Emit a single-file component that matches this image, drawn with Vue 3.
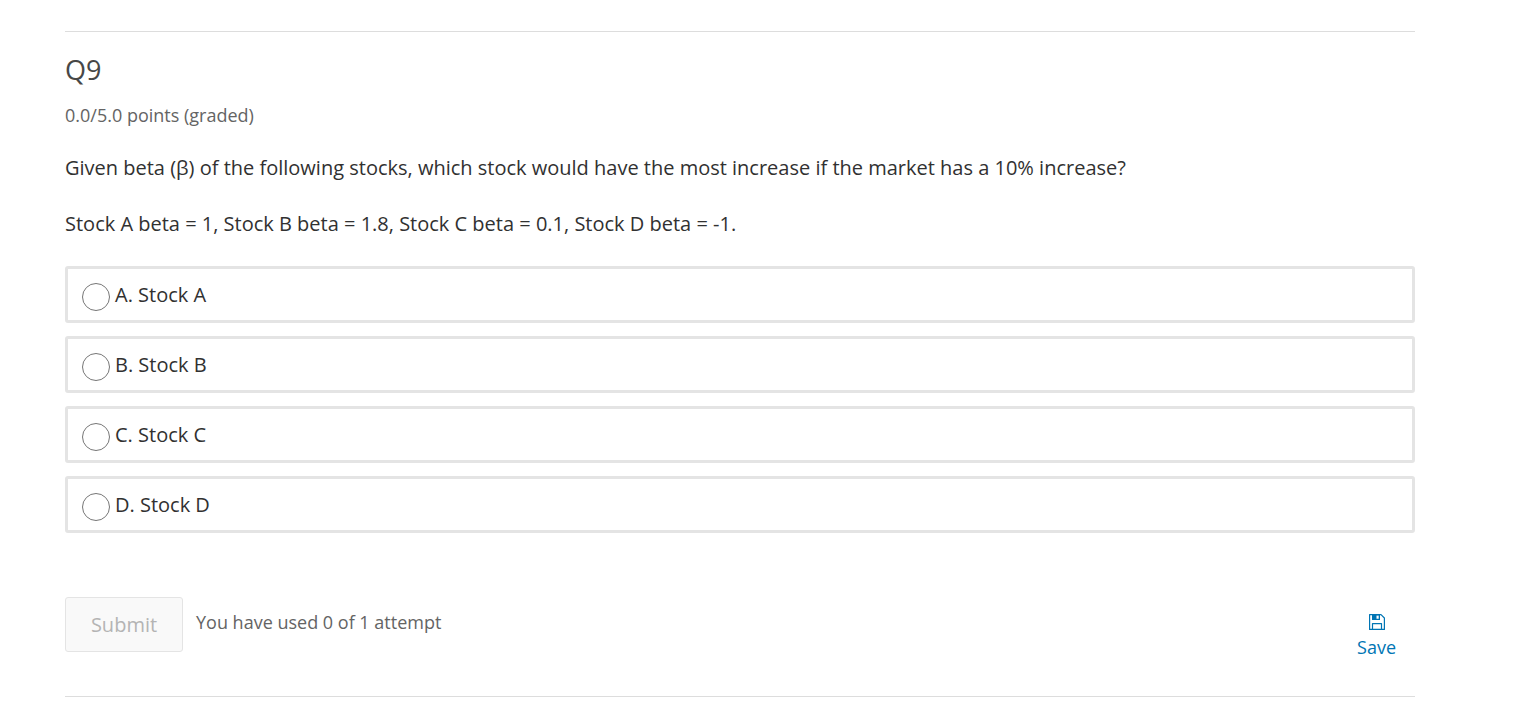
<script setup>
import { ref } from 'vue'

const choices = ['A. Stock A', 'B. Stock B', 'C. Stock C', 'D. Stock D']
const selected = ref(null)
</script>

<template>
  <main class="problem">
    <h3 class="title">Q9</h3>
    <p class="progress">0.0/5.0 points (graded)</p>
    <p class="question">Given beta (β) of the following stocks, which stock would have the most increase if the market has a 10% increase?</p>
    <p class="question">Stock A beta = 1, Stock B beta = 1.8, Stock C beta = 0.1, Stock D beta = -1.</p>
    <div class="choices" role="radiogroup" aria-label="Stock choices">
      <label v-for="(choice, i) in choices" :key="choice" class="choice" :for="'choice-' + i">
        <input :id="'choice-' + i" v-model="selected" class="radio" type="radio" name="stock" :value="i" />
        <span class="choice-text">{{ choice }}</span>
      </label>
    </div>
    <div class="action">
      <button class="submit" type="button" disabled>Submit</button>
      <p class="attempts">You have used 0 of 1 attempt</p>
      <button class="save" type="button">
        <svg class="save-icon" viewBox="0 0 16 16" width="16" height="16" aria-hidden="true">
          <path d="M0.600 0.600H12L15.400 4V15.400H0.600Z M3.500 15.400V9.600H12.500V15.400" fill="none" stroke="currentColor" stroke-width="1.200" stroke-linejoin="round" />
          <path d="M3 0.600H11V6H3Z M7.500 1.500V4.800H9.700V1.500Z" fill="currentColor" fill-rule="evenodd" />
        </svg>
        <span>Save</span>
      </button>
    </div>
  </main>
</template>

<style>
body {
  margin: 0;
  background: #fff;
}
</style>

<style scoped>
.problem {
  margin: 31px 109px 0 65px;
  padding: 20px 0 36px;
  border-top: 1px solid #ddd;
  border-bottom: 1px solid #ddd;
  font-family: "Open Sans", sans-serif;
  color: #313131;
}
.title {
  margin: 0;
  font-size: 27px;
  font-weight: 400;
  line-height: 36px;
  color: #474747;
}
.progress {
  margin: 14px 0 0;
  font-size: 18px;
  line-height: 26px;
  color: #646464;
}
.question {
  margin: 24px 0 0;
  font-size: 20px;
  line-height: 32px;
}
.choices {
  display: flex;
  flex-direction: column;
  gap: 13px;
  margin-top: 26px;
}
.choice {
  display: flex;
  align-items: center;
  box-sizing: border-box;
  min-height: 57px;
  padding: 0 14px;
  border: 3px solid #e4e4e4;
  border-radius: 3px;
  font-size: 20px;
  line-height: 32px;
}
.radio {
  appearance: none;
  flex: none;
  width: 28px;
  height: 28px;
  margin: 5px 5px 0 0;
  border: 1px solid #767676;
  border-radius: 50%;
  background: #fff;
}
.radio:checked {
  background: radial-gradient(circle, #0075b4 0 50%, #fff 55%);
}
.action {
  display: flex;
  align-items: flex-start;
  margin-top: 64px;
}
.submit {
  width: 118px;
  height: 55px;
  padding: 0;
  border: 1px solid #e4e4e4;
  border-radius: 3px;
  background: #f9f9f9;
  font: 400 20px/30px "Open Sans", sans-serif;
  color: #b4b4b4;
}
.attempts {
  margin: 12px 0 0 13px;
  font-size: 18px;
  line-height: 26px;
  color: #646464;
}
.save {
  display: flex;
  flex-direction: column;
  align-items: center;
  margin: 17px 19px 0 auto;
  padding: 0;
  border: 0;
  background: none;
  font: 400 18px/26px "Open Sans", sans-serif;
  color: #0075b4;
}
.save-icon {
  margin-bottom: 4px;
}
</style>
